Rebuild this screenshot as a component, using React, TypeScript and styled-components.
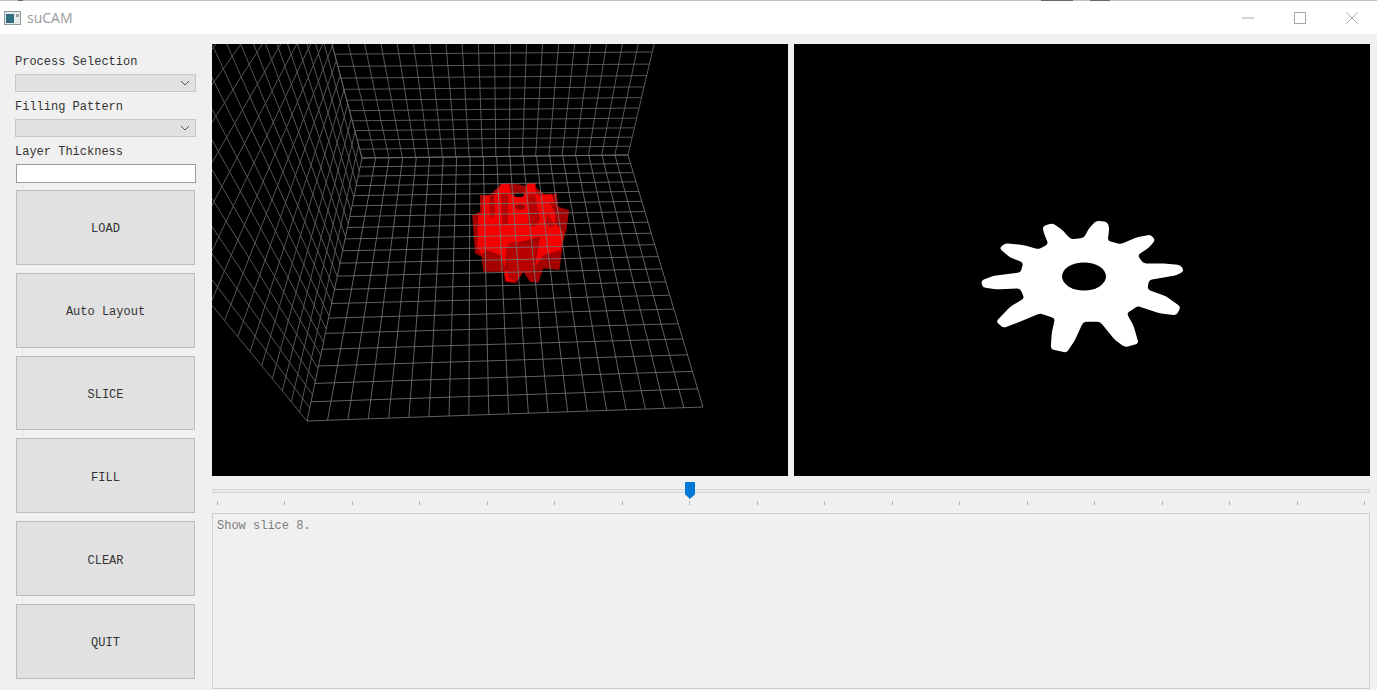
import React from 'react';
import styled, { createGlobalStyle } from 'styled-components';

type Pt = [number, number];

const GlobalStyle = createGlobalStyle`
  html, body {
    margin: 0;
    padding: 0;
    background: #f0f0f0;
    overflow: hidden;
  }
`;

const Win = styled.div`
  width: 1377px;
  height: 690px;
  display: flex;
  flex-direction: column;
  background: #f0f0f0;
  font-family: "Liberation Mono", monospace;
  font-size: 12px;
  color: #333;
  overflow: hidden;
`;

const TopEdge = styled.div`
  height: 1px;
  flex: none;
  background: linear-gradient(
    to right,
    #c2c2c2 18px, #666 18px, #666 23px, #c2c2c2 23px,
    #c2c2c2 1041px, #686868 1041px, #686868 1073px, #c2c2c2 1073px,
    #c2c2c2 1090px, #686868 1090px, #686868 1110px, #c2c2c2 1110px
  );
`;

const TitleBar = styled.div`
  height: 33px;
  flex: none;
  box-sizing: border-box;
  display: flex;
  align-items: center;
  background: #fff;
  padding-left: 4px;
`;

const AppName = styled.span`
  margin-left: 6px;
  font-family: "Open Sans", sans-serif;
  font-size: 14px;
  color: #999;
`;

const WinButtons = styled.div`
  margin-left: auto;
  margin-right: -1px;
  display: flex;
`;

const WinButton = styled.div`
  width: 52px;
  height: 32px;
  display: flex;
  align-items: center;
  justify-content: center;
`;

const Body = styled.div`
  flex: 1;
  display: flex;
  min-height: 0;
`;

const Sidebar = styled.div`
  width: 212px;
  flex: none;
  box-sizing: border-box;
  padding: 20px 16px 0 15px;
  display: flex;
  flex-direction: column;
`;

const Label = styled.div`
  height: 14px;
  line-height: 16px;
  margin-bottom: 6px;
  white-space: nowrap;
`;

const Select = styled.div`
  height: 18px;
  margin-bottom: 7px;
  box-sizing: border-box;
  background: #e1e1e1;
  border: 1px solid #c6c6c6;
  display: flex;
  align-items: center;
  justify-content: flex-end;
  padding-right: 5px;
`;

const TextInput = styled.div`
  height: 19px;
  margin: 0 0 7px 1px;
  box-sizing: border-box;
  background: #fff;
  border: 1px solid #9c9c9c;
`;

const ButtonStack = styled.div`
  display: flex;
  flex-direction: column;
  gap: 8px;
  margin: 0 1px;
`;

const Button = styled.div`
  height: 74.8px;
  box-sizing: border-box;
  padding-top: 4px;
  background: #e1e1e1;
  border: 1px solid #bcbcbc;
  display: flex;
  align-items: center;
  justify-content: center;
`;

const Main = styled.div`
  flex: 1;
  min-width: 0;
  box-sizing: border-box;
  padding: 10px 7px 1px 0;
  display: flex;
  flex-direction: column;
`;

const Views = styled.div`
  display: flex;
  gap: 6px;
  height: 432px;
  flex: none;
`;

const View = styled.div`
  width: 576px;
  height: 432px;
  background: #000;
  svg {
    display: block;
  }
`;

const Slider = styled.div`
  position: relative;
  height: 37px;
  flex: none;
`;

const Groove = styled.div`
  margin-top: 13px;
  height: 2px;
  background: #e7e7e7;
  border: 1px solid #d6d6d6;
`;

const Thumb = styled.div`
  position: absolute;
  left: 473px;
  top: 6px;
  width: 10px;
  height: 17px;
  background: #0078d7;
  border-radius: 1px 1px 0 0;
  clip-path: polygon(0 0, 100% 0, 100% 72%, 50% 100%, 0 72%);
`;

const Ticks = styled.div`
  display: flex;
  justify-content: space-between;
  margin: 8px 5px 0 5px;
`;

const Tick = styled.div`
  width: 1px;
  height: 4px;
  background: #b4b4b4;
`;

const Log = styled.div`
  flex: 1;
  box-sizing: border-box;
  border: 1px solid #d0d0d0;
  padding: 5px 4px;
  line-height: 14px;
  color: #7c7c7c;
`;

const fmt = (pt: Pt) => `${pt[0].toFixed(1)} ${pt[1].toFixed(1)}`;

// map the unit square onto a quad (a, b along u; d, c along u at v=1)
const homography = (a: Pt, b: Pt, c: Pt, d: Pt) => {
  const dx1 = b[0] - c[0];
  const dx2 = d[0] - c[0];
  const sx = a[0] - b[0] + c[0] - d[0];
  const dy1 = b[1] - c[1];
  const dy2 = d[1] - c[1];
  const sy = a[1] - b[1] + c[1] - d[1];
  const det = dx1 * dy2 - dx2 * dy1;
  const g = (sx * dy2 - dx2 * sy) / det;
  const h = (dx1 * sy - sx * dy1) / det;
  const p = b[0] - a[0] + g * b[0];
  const q = d[0] - a[0] + h * d[0];
  const r = b[1] - a[1] + g * b[1];
  const s = d[1] - a[1] + h * d[1];
  return (u: number, v: number): Pt => {
    const w = g * u + h * v + 1;
    return [(p * u + q * v + a[0]) / w, (r * u + s * v + a[1]) / w];
  };
};

const gridPath = (a: Pt, b: Pt, c: Pt, d: Pt, n = 20) => {
  const map = homography(a, b, c, d);
  let out = '';
  for (let i = 0; i <= n; i += 1) {
    const t = i / n;
    out += `M${fmt(map(t, 0))}L${fmt(map(t, 1))}`;
    out += `M${fmt(map(0, t))}L${fmt(map(1, t))}`;
  }
  return out;
};

// left wall: lines fan out from a point behind the corner edge, cross lines widen towards the camera
const sideWallPath = () => {
  const fan: Pt = [490, 644];
  let out = '';
  for (let k = 0; k <= 20; k += 1) {
    const e: Pt = [362 - (55 * k) / 20, 158 + (263 * k) / 20];
    const s = (e[0] - 100) / (fan[0] - e[0]);
    out += `M${fmt(e)}L${fmt([e[0] - (fan[0] - e[0]) * s, e[1] - (fan[1] - e[1]) * s])}`;
  }
  for (let j = 1; j <= 20; j += 1) {
    const up = 13 * j * (1 + 0.01 * j);
    const across = 7 * j * (1 + 0.059 * j);
    out += `M${fmt([362 - up / 3.8, 158 - up])}L${fmt([307 - across, 421 - 1.22 * across])}`;
  }
  return out;
};

const floorGrid = gridPath([307, 421], [703, 407], [628, 155], [362, 158]);
const backGrid = gridPath([362, 158], [628, 155], [688, -100], [294, -100]);
const sideGrid = sideWallPath();

const toPage = (x: number, y: number, ox: number, oy: number): Pt => [ox + x / 3, oy + y / 3];

const zoomPts = (pts: number[], ox: number, oy: number) => {
  const out: string[] = [];
  for (let i = 0; i < pts.length; i += 2) {
    const [x, y] = toPage(pts[i], pts[i + 1], ox, oy);
    out.push(`${x.toFixed(1)},${y.toFixed(1)}`);
  }
  return out.join(' ');
};

const modelDark = zoomPts([185, 70, 205, 70, 230, 72, 258, 78, 262, 68, 285, 68, 290, 85, 320, 108, 350, 98, 355, 140, 387, 150, 380, 205, 370, 245, 358, 330, 310, 325, 295, 368, 270, 365, 250, 335, 228, 370, 195, 365, 192, 335, 130, 335, 125, 290, 105, 280, 97, 165, 120, 155, 120, 105, 150, 105], 440, 160);
const modelBright = [
  [185, 72, 205, 72, 215, 105, 255, 100, 262, 72, 285, 72, 288, 100, 325, 120, 345, 160, 345, 190, 370, 215, 362, 270, 310, 285, 285, 320, 300, 230, 225, 250, 200, 265, 195, 325, 183, 285, 140, 270, 125, 285, 112, 262, 115, 165, 150, 150, 165, 105],
  [130, 110, 150, 105, 148, 150, 125, 160],
  [300, 105, 335, 102, 345, 135, 320, 122],
  [192, 330, 225, 340, 222, 365, 198, 362],
];
const modelShade = [
  [183, 100, 205, 100, 205, 190, 188, 195],
  [265, 105, 285, 100, 300, 180, 285, 200, 265, 195],
  [205, 250, 230, 245, 275, 258, 292, 240, 282, 322, 265, 345, 250, 335, 228, 365, 205, 355],
  [320, 160, 345, 195, 330, 205, 318, 190],
  [150, 130, 165, 120, 165, 165, 150, 175],
];

const gearOutline = [250, 95, 248, 78, 278, 70, 305, 88, 332, 118, 372, 114, 385, 88, 408, 62, 442, 65, 448, 85, 443, 122, 482, 133, 530, 112, 572, 104, 586, 120, 568, 142, 533, 166, 550, 190, 620, 191, 662, 195, 672, 213, 650, 226, 567, 240, 562, 268, 620, 290, 662, 320, 650, 346, 600, 340, 533, 318, 500, 340, 520, 375, 536, 430, 495, 442, 465, 420, 420, 365, 370, 365, 345, 420, 320, 458, 272, 447, 275, 400, 285, 355, 240, 340, 180, 365, 130, 384, 108, 365, 150, 320, 193, 295, 180, 265, 110, 268, 68, 262, 63, 242, 100, 228, 182, 217, 190, 188, 150, 172, 118, 145, 135, 130, 190, 135, 235, 148, 265, 132];

// the outline as a polygon whose corners are eased a little
const roundedPath = (flat: number[], ox: number, oy: number, radius: number) => {
  const pts: Pt[] = [];
  for (let i = 0; i < flat.length; i += 2) pts.push(toPage(flat[i], flat[i + 1], ox, oy));
  const toward = (from: Pt, to: Pt): Pt => {
    const dx = to[0] - from[0];
    const dy = to[1] - from[1];
    const r = Math.min(radius, Math.hypot(dx, dy) / 2) / Math.hypot(dx, dy);
    return [from[0] + dx * r, from[1] + dy * r];
  };
  let out = '';
  pts.forEach((pt, i) => {
    const prev = pts[(i + pts.length - 1) % pts.length];
    const next = pts[(i + 1) % pts.length];
    out += `${i === 0 ? 'M' : 'L'}${fmt(toward(pt, prev))}Q${fmt(pt)} ${fmt(toward(pt, next))}`;
  });
  return `${out}Z`;
};

const sliceGear = roundedPath(gearOutline, 960, 200, 3);

const AppIcon = () => (
  <svg width="17" height="14" viewBox="0 0 17 14">
    <rect x="0.5" y="0.5" width="16" height="13" fill="#e6eaea" stroke="#8b9a9c" />
    <rect x="2" y="3" width="8" height="9" fill="#2f6f7c" />
    <rect x="12" y="3" width="3" height="3" fill="#9aa6a8" />
  </svg>
);

const Chevron = () => (
  <svg width="10" height="6" viewBox="0 0 10 6">
    <path d="M1 1l4 4 4-4" fill="none" stroke="#555" strokeWidth="1" />
  </svg>
);

const ScenePanel = () => (
  <svg width="576" height="432" viewBox="212 44 576 432">
    <path d={sideGrid} fill="none" stroke="#555" strokeWidth="1" />
    <polygon points={modelDark} fill="#a50000" />
    {modelBright.map((pts, i) => (
      <polygon key={i} points={zoomPts(pts, 440, 160)} fill="#f50000" />
    ))}
    {modelShade.map((pts, i) => (
      <polygon key={i} points={zoomPts(pts, 440, 160)} fill="#b80000" />
    ))}
    <ellipse cx="519" cy="195" rx="5" ry="2" fill="#000" />
    <ellipse cx="520" cy="207" rx="5" ry="2.5" fill="#900000" />
    <path d={backGrid} fill="none" stroke="#6c6c6c" strokeOpacity="0.8" strokeWidth="1" />
    <path d={floorGrid} fill="none" stroke="#787878" strokeOpacity="0.8" strokeWidth="1" />
  </svg>
);

const SlicePanel = () => (
  <svg width="576" height="432" viewBox="794 44 576 432">
    <path d={sliceGear} fill="#fff" />
    <ellipse cx="1084" cy="276.500" rx="22" ry="14" fill="#000" />
  </svg>
);

const buttons = ['LOAD', 'Auto Layout', 'SLICE', 'FILL', 'CLEAR', 'QUIT'];

const App: React.FC = () => (
  <Win>
    <GlobalStyle />
    <TopEdge />
    <TitleBar>
      <AppIcon />
      <AppName>suCAM</AppName>
      <WinButtons>
        <WinButton>
          <svg width="12" height="2" viewBox="0 0 12 2">
            <path d="M0 1h12" stroke="#a8a8a8" />
          </svg>
        </WinButton>
        <WinButton>
          <svg width="12" height="12" viewBox="0 0 12 12">
            <rect x="0.500" y="0.500" width="11" height="11" fill="none" stroke="#a8a8a8" />
          </svg>
        </WinButton>
        <WinButton>
          <svg width="12" height="12" viewBox="0 0 12 12">
            <path d="M0.500 0.500l11 11M11.500 0.500l-11 11" stroke="#a8a8a8" />
          </svg>
        </WinButton>
      </WinButtons>
    </TitleBar>
    <Body>
      <Sidebar>
        <Label>Process Selection</Label>
        <Select><Chevron /></Select>
        <Label>Filling Pattern</Label>
        <Select><Chevron /></Select>
        <Label>Layer Thickness</Label>
        <TextInput />
        <ButtonStack>
          {buttons.map((name) => (
            <Button key={name}>{name}</Button>
          ))}
        </ButtonStack>
      </Sidebar>
      <Main>
        <Views>
          <View><ScenePanel /></View>
          <View><SlicePanel /></View>
        </Views>
        <Slider>
          <Groove />
          <Thumb />
          <Ticks>
            {Array.from({ length: 18 }, (_, i) => <Tick key={i} />)}
          </Ticks>
        </Slider>
        <Log>Show slice 8.</Log>
      </Main>
    </Body>
  </Win>
);

export default App;
